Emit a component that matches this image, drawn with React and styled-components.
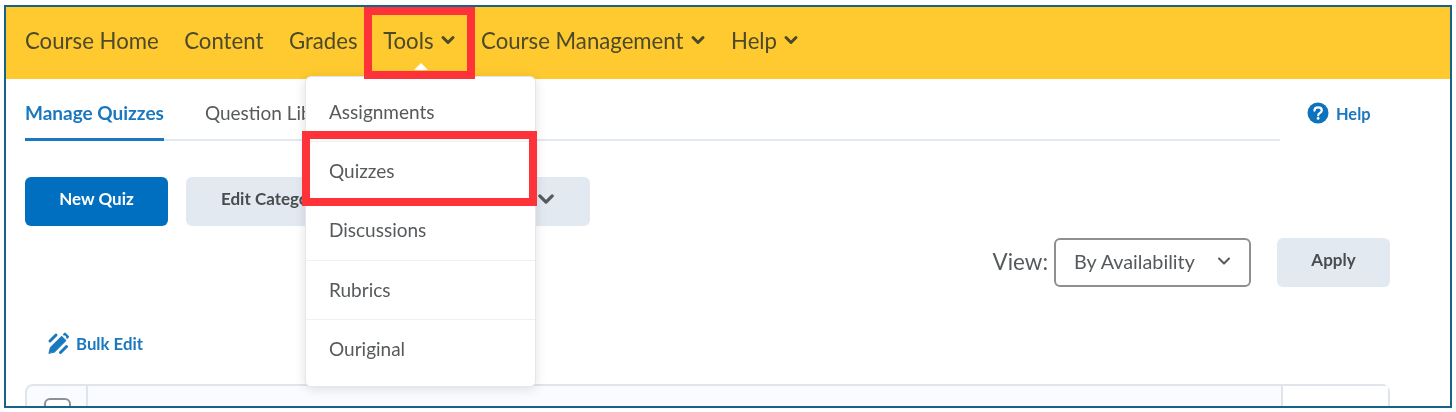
import styled, { createGlobalStyle } from "styled-components";

const GlobalStyle = createGlobalStyle`
  html, body {
    margin: 0;
    background: #fff;
    overflow: hidden;
  }
`;

const navItems = [
  { label: "Course Home" },
  { label: "Content" },
  { label: "Grades" },
  { label: "Tools", menu: true },
  { label: "Course Management", menu: true },
  { label: "Help", menu: true },
];

const menuItems = ["Assignments", "Quizzes", "Discussions", "Rubrics", "Ouriginal"];

function Chevron({ size = 16, weight = 3 }) {
  return (
    <svg width={size} height={size} viewBox="0 0 16 16" fill="none">
      <path d="M3 5.5 L8 10.5 L13 5.5" stroke="currentColor" strokeWidth={weight} strokeLinecap="round" strokeLinejoin="round" />
    </svg>
  );
}

function HelpIcon() {
  return (
    <svg width="22" height="22" viewBox="0 0 22 22">
      <circle cx="11" cy="11" r="10.5" fill="#0f72bd" />
      <path d="M7.4 8.6 C7.5 6.4 9.2 5.4 11.1 5.4 C13.2 5.4 14.8 6.7 14.8 8.5 C14.8 10.8 11.4 10.9 11.2 13.3" fill="none" stroke="#fff" strokeWidth="2.2" strokeLinecap="round" />
      <circle cx="11.1" cy="16.4" r="1.4" fill="#fff" />
    </svg>
  );
}

function BulkEditIcon() {
  return (
    <svg width="22" height="24" viewBox="0 0 22 24" fill="none" stroke="#1a78bf" strokeLinecap="round">
      <path d="M2 22 L3.4 16.4 L14.6 5.2 L19 9.6 L7.8 20.8 Z" fill="#1a78bf" strokeWidth="1" strokeLinejoin="round" />
      <path d="M17 3.6 L18 2.6 L21 5.6 L20.2 6.8" fill="#1a78bf" strokeWidth="2" strokeLinejoin="round" />
      <path d="M3 10 L9 4" strokeWidth="3" />
      <path d="M13.5 21.5 L19.5 15.5" strokeWidth="3" />
    </svg>
  );
}

export default function App() {
  return (
    <Frame>
      <GlobalStyle />
      <NavBar>
        {navItems.map((item) => (
          <NavItem key={item.label}>
            {item.label}
            {item.menu && <Chevron />}
          </NavItem>
        ))}
      </NavBar>

      <Content>
        <TabRow>
          <Tabs>
            <Tab $active>Manage Quizzes</Tab>
            <Tab>Question Library</Tab>
          </Tabs>
          <HelpLink>
            <HelpIcon />
            Help
          </HelpLink>
        </TabRow>

        <ActionRow>
          <PrimaryButton>New Quiz</PrimaryButton>
          <ActionGroup>
            <span>Edit Categories</span>
            <MoreChevron>
              <Chevron size={20} weight={2.6} />
            </MoreChevron>
          </ActionGroup>
        </ActionRow>

        <ViewRow>
          <ViewLabel>View:</ViewLabel>
          <Select>
            By Availability
            <Chevron size={16} weight={2} />
          </Select>
          <ApplyButton>Apply</ApplyButton>
        </ViewRow>

        <BulkEdit>
          <BulkEditIcon />
          Bulk Edit
        </BulkEdit>

        <Table>
          <CheckCell>
            <Checkbox />
          </CheckCell>
          <MainCell />
          <EndCell />
        </Table>
      </Content>

      <Caret />
      <Menu>
        {menuItems.map((item) => (
          <MenuItem key={item}>{item}</MenuItem>
        ))}
      </Menu>
      <ToolsHighlight />
      <QuizzesHighlight />
    </Frame>
  );
}

const Frame = styled.div`
  position: relative;
  box-sizing: border-box;
  width: 1448px;
  height: 403px;
  margin: 5px 0 0 4px;
  border: 2px solid #14638a;
  background: #fff;
  overflow: hidden;
  font-family: Lato, "Liberation Sans", sans-serif;
  color: #494c4e;
  filter: blur(0.4px);
`;

const NavBar = styled.nav`
  display: flex;
  align-items: center;
  gap: 25.5px;
  height: 72px;
  padding: 0 0 6px 19px;
  box-sizing: border-box;
  background: #ffca30;
`;

const NavItem = styled.div`
  display: flex;
  align-items: center;
  gap: 6px;
  font-size: 22.2px;
  color: #4c4a2a;
  white-space: nowrap;
`;

const Content = styled.div`
  padding: 0 60px 0 19px;
`;

const TabRow = styled.div`
  display: flex;
  align-items: flex-start;
`;

const Tabs = styled.div`
  display: flex;
  gap: 41px;
  width: 1255px;
  height: 62px;
  box-sizing: border-box;
  border-bottom: 2px solid #e3e9f1;
`;

const Tab = styled.div`
  box-sizing: border-box;
  height: 62px;
  padding-top: 22px;
  font-size: 19px;
  font-weight: ${(p) => (p.$active ? 700 : 400)};
  color: ${(p) => (p.$active ? "#1a78bf" : "#565a5c")};
  border-bottom: ${(p) => (p.$active ? "3px solid #1a78bf" : "none")};
  white-space: nowrap;
`;

const HelpLink = styled.div`
  display: flex;
  align-items: center;
  gap: 7px;
  margin: 23px 0 0 27px;
  font-size: 16.4px;
  font-weight: 700;
  color: #1a78bf;
`;

const ActionRow = styled.div`
  display: flex;
  gap: 18px;
  margin-top: 36px;
`;

const PrimaryButton = styled.div`
  display: flex;
  align-items: center;
  justify-content: center;
  width: 143px;
  height: 49px;
  padding-bottom: 6px;
  box-sizing: border-box;
  border-radius: 6px;
  background: #006fbf;
  color: #fff;
  font-size: 17px;
  font-weight: 700;
`;

const ActionGroup = styled.div`
  display: flex;
  align-items: center;
  justify-content: space-between;
  box-sizing: border-box;
  width: 404px;
  height: 49px;
  padding: 0 34px 3px 35px;
  border-radius: 6px;
  background: #e3e9f1;
  color: #494c4e;
  font-size: 17px;
  font-weight: 700;

  span {
    padding-bottom: 3px;
  }
`;

const MoreChevron = styled.span`
  display: flex;
  color: #565a5c;
`;

const ViewRow = styled.div`
  display: flex;
  align-items: center;
  justify-content: flex-end;
  margin-top: 12px;
  width: 1365px;
`;

const ViewLabel = styled.span`
  font-size: 22.4px;
  color: #565a5c;
  margin-right: 6px;
  padding-bottom: 2px;
`;

const Select = styled.div`
  display: flex;
  align-items: center;
  justify-content: space-between;
  box-sizing: border-box;
  width: 197px;
  height: 49px;
  padding: 0 17px 3px 18px;
  border: 2px solid #8d9092;
  border-radius: 6px;
  font-size: 19.8px;
  color: #565a5c;
`;

const ApplyButton = styled.div`
  display: flex;
  align-items: center;
  justify-content: center;
  width: 113px;
  height: 49px;
  margin-left: 26px;
  padding-bottom: 6px;
  box-sizing: border-box;
  border-radius: 6px;
  background: #e3e9f1;
  font-size: 17px;
  font-weight: 700;
`;

const BulkEdit = styled.div`
  display: flex;
  align-items: center;
  gap: 7px;
  margin: 44px 0 0 22px;
  height: 24px;
  font-size: 16.8px;
  font-weight: 700;
  color: #1a78bf;
`;

const Table = styled.div`
  display: flex;
  width: 1365px;
  height: 60px;
  margin-top: 29px;
  box-sizing: border-box;
  border: 2px solid #e0e5ec;
  border-radius: 8px 8px 0 0;
  background: #f9fbff;
`;

const CheckCell = styled.div`
  width: 61px;
  padding: 12px 0 0 17px;
  box-sizing: border-box;
  border-right: 2px solid #e0e5ec;
`;

const Checkbox = styled.div`
  width: 27px;
  height: 27px;
  box-sizing: border-box;
  border: 2px solid #8d9092;
  border-radius: 6px;
  background: #fff;
`;

const MainCell = styled.div`
  flex: 1;
`;

const EndCell = styled.div`
  width: 105px;
  border-left: 2px solid #e0e5ec;
  background: #fff;
`;

const RedBox = styled.div`
  position: absolute;
  box-sizing: border-box;
  border: 8px solid #fd3339;
`;

const ToolsHighlight = styled(RedBox)`
  left: 358px;
  top: 0;
  width: 111px;
  height: 72px;
`;

const QuizzesHighlight = styled(RedBox)`
  left: 296px;
  top: 124px;
  width: 235px;
  height: 75px;
`;

const Caret = styled.div`
  position: absolute;
  z-index: 1;
  left: 408px;
  top: 56px;
  width: 0;
  height: 0;
  border-left: 7px solid transparent;
  border-right: 7px solid transparent;
  border-bottom: 7px solid #fff;
`;

const Menu = styled.div`
  position: absolute;
  left: 299px;
  top: 69px;
  width: 231px;
  height: 311px;
  padding-top: 6px;
  box-sizing: border-box;
  background: #fff;
  border: 1px solid #e3e6ea;
  border-radius: 6px;
  box-shadow: 0 2px 12px rgba(0, 0, 0, 0.12);
`;

const MenuItem = styled.div`
  display: flex;
  align-items: center;
  box-sizing: border-box;
  height: 59.3px;
  padding: 0 0 2px 23px;
  font-size: 19px;
  color: #565a5c;
  border-bottom: 1px solid #eef0f5;

  &:last-child {
    border-bottom: none;
  }
`;
